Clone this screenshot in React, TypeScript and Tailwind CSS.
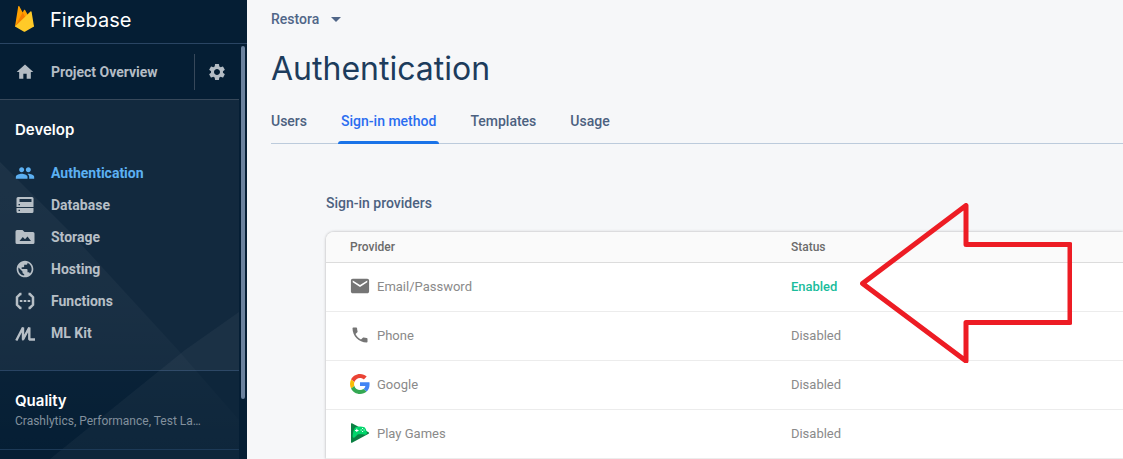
import type { ReactNode } from "react";
import { MdHome, MdPeople, MdPublic, MdSettings } from "react-icons/md";

const roboto = "font-['Roboto',sans-serif]";
const display = "font-['Inter','Roboto',sans-serif]";

function FirebaseLogo() {
  return (
    <svg viewBox="0 0 19 26" className="h-[26px] w-[19px] shrink-0" aria-hidden="true">
      <path fill="#FFA000" d="M0 20.6 3.2.5c.1-.6.8-.7 1.1-.2l3.4 6.3 1.3-2.5c.3-.5.9-.5 1.1 0L19 20.6z" />
      <path fill="#F57C00" d="M11 12.6 7.7 6.6 0 20.6z" />
      <path fill="#FFCA28" d="M19 20.6 16.6 5.8c-.1-.6-.8-.8-1.1-.4L0 20.6l8.6 4.9c.5.3 1.2.3 1.7 0z" />
    </svg>
  );
}

function DatabaseIcon() {
  return (
    <svg viewBox="0 0 20 20" className="size-5" fill="currentColor" aria-hidden="true">
      <path
        fillRule="evenodd"
        d="M3 2h14a1.500 1.500 0 0 1 1.500 1.500V12h-17V3.500A1.500 1.500 0 0 1 3 2zm1.500 2v3h12V4zM3.500 9v1.200h1.500V9z"
      />
      <path
        fillRule="evenodd"
        d="M1.500 13h17v3.500A1.500 1.500 0 0 1 17 18H3a1.500 1.500 0 0 1-1.500-1.500zm2 1.800v1.200h1.500v-1.200z"
      />
    </svg>
  );
}

function StorageIcon() {
  return (
    <svg viewBox="0 0 20 20" className="size-5" fill="currentColor" aria-hidden="true">
      <path
        fillRule="evenodd"
        d="M2 3h5.500l2 2H18a1.500 1.500 0 0 1 1.500 1.500v9A1.500 1.500 0 0 1 18 17H2a1.500 1.500 0 0 1-1.500-1.500v-11A1.500 1.500 0 0 1 2 3zm2.500 11h11.500l-3.500-4.500-2.500 2.700-2.200-2.200z"
      />
    </svg>
  );
}

function FunctionsIcon() {
  return (
    <svg viewBox="0 0 20 20" className="size-5" aria-hidden="true">
      <path
        fill="none"
        stroke="currentColor"
        strokeWidth="2.500"
        d="M6.500 3H5.200L2 6.200V13.800L5.200 17H6.500M13.500 3H14.800L18 6.200V13.800L14.800 17H13.500"
      />
      <path fill="currentColor" d="M4.800 9h2.600v2H4.800zM8.700 9h2.600v2H8.700zM12.600 9h2.600v2h-2.600z" />
    </svg>
  );
}

function MlKitIcon() {
  return (
    <svg viewBox="0 0 20 20" className="size-5" aria-hidden="true">
      <path fill="none" stroke="currentColor" strokeWidth="2.400" strokeLinejoin="bevel" d="M1.300 17.500 8 4.500v12L14.300 4.500v12H20" />
      <path fill="none" stroke="currentColor" strokeWidth="1.500" d="M7.500 17.300 13.500 6" />
    </svg>
  );
}

function EmailIcon() {
  return (
    <svg viewBox="1 1 22 22" className="size-5 text-[#757575]" fill="currentColor" aria-hidden="true">
      <path d="M20 4H4c-1.100 0-1.990.9-1.990 2L2 18c0 1.100.9 2 2 2h16c1.100 0 2-.9 2-2V6c0-1.100-.9-2-2-2zm0 4-8 5-8-5V6l8 5 8-5v2z" />
    </svg>
  );
}

function PhoneIcon() {
  return (
    <svg viewBox="0 0 24 24" className="size-5 text-[#757575]" fill="currentColor" aria-hidden="true">
      <path d="M6.620 10.790c1.440 2.830 3.760 5.140 6.590 6.590l2.200-2.200c.270-.270.670-.360 1.020-.240 1.120.370 2.330.570 3.570.570.550 0 1 .450 1 1V20c0 .550-.450 1-1 1-9.390 0-17-7.610-17-17 0-.550.450-1 1-1h3.500c.550 0 1 .450 1 1 0 1.250.200 2.450.570 3.570.110.350.030.740-.250 1.020l-2.200 2.200z" />
    </svg>
  );
}

function GoogleIcon() {
  return (
    <svg viewBox="0 0 48 48" className="size-5" aria-hidden="true">
      <path fill="#EA4335" d="M24 9.500c3.540 0 6.710 1.220 9.210 3.600l6.850-6.850C35.900 2.380 30.470 0 24 0 14.620 0 6.510 5.380 2.560 13.220l7.980 6.190C12.430 13.720 17.740 9.500 24 9.500z" />
      <path fill="#4285F4" d="M46.980 24.550c0-1.570-.150-3.090-.380-4.550H24v9.020h12.940c-.580 2.960-2.260 5.480-4.780 7.180l7.730 6c4.510-4.180 7.090-10.360 7.090-17.650z" />
      <path fill="#FBBC05" d="M10.530 28.590c-.480-1.450-.760-2.990-.760-4.590s.270-3.140.760-4.590l-7.980-6.190C.920 16.460 0 20.120 0 24c0 3.880.920 7.540 2.560 10.780l7.970-6.190z" />
      <path fill="#34A853" d="M24 48c6.480 0 11.930-2.130 15.890-5.810l-7.730-6c-2.150 1.450-4.920 2.300-8.160 2.300-6.260 0-11.570-4.220-13.470-9.910l-7.980 6.190C6.510 42.620 14.620 48 24 48z" />
    </svg>
  );
}

function PlayGamesIcon() {
  return (
    <svg viewBox="0 0 20 20" className="size-5" aria-hidden="true">
      <path fill="#0B8043" d="M1 .8Q1-.2 2 .3L18.600 9.200Q19.500 10 18.600 10.800L2 19.700Q1 20.200 1 19.200z" />
      <path fill="#00D66B" d="M5.500 4.300Q10 2.800 14.500 4.300Q16.500 6 17 9.800Q16.800 12 15 11.800L12.500 11.300H8L4.500 14.500Q2.500 15.500 2.600 13Q3 7 5.500 4.300z" />
      <path fill="#fff" d="M6.300 5.700h1v1.200h1.200v1H7.300v1.200h-1V7.900H5.100v-1h1.200zM12.100 5h1v1h-1zM12.100 8h1v1h-1zM10.600 6.500h1v1h-1zM13.600 6.500h1v1h-1z" />
    </svg>
  );
}

type NavItem = { label: string; icon: ReactNode; active?: boolean };

const navItems: NavItem[] = [
  { label: "Authentication", icon: <MdPeople className="size-5" />, active: true },
  { label: "Database", icon: <DatabaseIcon /> },
  { label: "Storage", icon: <StorageIcon /> },
  { label: "Hosting", icon: <MdPublic className="size-5" /> },
  { label: "Functions", icon: <FunctionsIcon /> },
  { label: "ML Kit", icon: <MlKitIcon /> },
];

const tabs = ["Users", "Sign-in method", "Templates", "Usage"];

const providers = [
  { name: "Email/Password", icon: <EmailIcon />, enabled: true },
  { name: "Phone", icon: <PhoneIcon />, enabled: false },
  { name: "Google", icon: <GoogleIcon />, enabled: false },
  { name: "Play Games", icon: <PlayGamesIcon />, enabled: false },
];

function Facets() {
  return (
    <svg viewBox="0 0 239 359" className="pointer-events-none absolute top-0 left-0 h-[359px] w-[239px]" aria-hidden="true">
      <defs>
        <linearGradient id="facet" x1="0" y1="0" x2="0" y2="1">
          <stop offset="0" stopColor="#fff" stopOpacity="0.045" />
          <stop offset="0.500" stopColor="#fff" stopOpacity="0.030" />
          <stop offset="1" stopColor="#fff" stopOpacity="0" />
        </linearGradient>
      </defs>
      <path fill="url(#facet)" d="M0 62 68 130 178 250 239 320V359H0z" />
      <path fill="#fff" fillOpacity="0.040" d="M239 212 185 250 50 359H239z" />
    </svg>
  );
}

function Sidebar() {
  return (
    <aside className="flex w-[247px] shrink-0 flex-col bg-[#051e34]">
      <a href="#home" className="flex h-11 items-start gap-4 border-b border-[#2a4563] pl-[15px] pt-[6px] text-white">
        <FirebaseLogo />
        <span className={`${display} text-xl leading-7`}>Firebase</span>
      </a>
      <div className="flex flex-1">
        <div className="flex min-w-0 flex-1 flex-col">
          <div className="flex h-14 items-center border-b border-[#37485a] text-[#b4bcc4]">
            <a href="#overview" className="flex flex-1 items-center gap-4 pl-[15px] text-sm font-bold">
              <MdHome className="size-5" />
              Project Overview
            </a>
            <button type="button" aria-label="Project settings" className="flex h-9 w-[45px] items-center justify-center border-l border-[#37485a]">
              <MdSettings className="size-5" />
            </button>
          </div>
          <nav aria-label="Console" className="relative flex flex-1 flex-col">
            <Facets />
            <section className="border-b border-[#254160] bg-[#12293e] pt-5 pb-[21px]">
              <h2 className={`${display} pl-[15px] text-[15px] leading-5 font-semibold text-white`}>Develop</h2>
              <ul className="relative mt-[17px]">
                {navItems.map((item) => (
                  <li key={item.label}>
                    <a
                      href={`#${item.label.toLowerCase().replace(" ", "-")}`}
                      aria-current={item.active ? "page" : undefined}
                      className={`flex h-8 items-center gap-4 pl-[15px] text-sm font-bold ${item.active ? "text-[#5cb0f2]" : "text-[#b7bfc6]"}`}
                    >
                      {item.icon}
                      {item.label}
                    </a>
                  </li>
                ))}
              </ul>
            </section>
            <section className="relative h-[79px] border-b border-[#1d3a57] pt-5 pr-6 pl-[15px]">
              <h2 className={`${display} text-[15px] leading-5 font-semibold text-white`}>Quality</h2>
              <p className="truncate text-xs leading-5 text-[#82909d]">Crashlytics, Performance, Test La…</p>
            </section>
          </nav>
        </div>
        <div className="w-2 px-0.5 pt-[2px]">
          <div className="h-[353px] rounded-full bg-[#6b829e]" />
        </div>
      </div>
    </aside>
  );
}

function ProvidersTable() {
  return (
    <div className="overflow-hidden rounded-tl-lg bg-white shadow-[0_0_3px_rgba(0,0,0,0.300)]">
      <table className="w-full table-fixed border-collapse text-left text-[13px]">
        <thead>
          <tr className="h-[30px] border-b border-[#dcdcdc] bg-[#fafafa] text-xs text-[#6b6b6b]">
            <th scope="col" className="w-7/12 pl-6 font-medium">Provider</th>
            <th scope="col" className="font-medium">Status</th>
          </tr>
        </thead>
        <tbody className="text-[#8a8a8a]">
          {providers.map((p) => (
            <tr key={p.name} className="h-[49px] border-b border-[#ececec]">
              <td className="pl-6">
                <span className="flex items-start gap-[7px] leading-[22px]">
                  {p.icon}
                  {p.name}
                </span>
              </td>
              <td className={p.enabled ? "font-medium text-[#1abc9c]" : ""}>{p.enabled ? "Enabled" : "Disabled"}</td>
            </tr>
          ))}
        </tbody>
      </table>
    </div>
  );
}

function Arrow() {
  return (
    <svg viewBox="0 0 212 160" className="pointer-events-none absolute top-[203px] left-[613px] h-40 w-[212px]" aria-hidden="true">
      <path
        fill="none"
        stroke="#ED1C24"
        strokeWidth="5"
        strokeLinejoin="round"
        d="M2.500 80.500 106 2.500V41.500H210V119.500H106V158z"
      />
    </svg>
  );
}

export default function App() {
  return (
    <div className={`${roboto} flex min-h-screen bg-[#f6f7f9]`}>
      <Sidebar />
      <main className="relative min-w-0 flex-1 pl-6">
        <button type="button" className="mt-[9px] flex h-5 items-center gap-3 text-sm font-medium text-[#506688]">
          Restora
          <svg viewBox="0 0 10 5" className="h-[5px] w-[10px]" fill="currentColor" aria-hidden="true">
            <path d="M0 0h10L5 5z" />
          </svg>
        </button>
        <h1 className={`${display} mt-5 text-[32px] leading-10 text-[#1d3c5c]`}>Authentication</h1>
        <div role="tablist" className="mt-[11px] flex h-11 gap-[34px] border-b border-[#bccbdc]">
          {tabs.map((tab) => {
            const selected = tab === "Sign-in method";
            return (
              <button
                key={tab}
                type="button"
                role="tab"
                aria-selected={selected}
                className={`relative flex h-[43px] items-center pb-0.5 text-sm font-medium ${selected ? "text-[#2a6df0]" : "text-[#4c6180]"}`}
              >
                {tab}
                {selected && <span className="absolute -inset-x-[3px] -bottom-px h-[3px] rounded-t-sm bg-[#1a73e8]" />}
              </button>
            );
          })}
        </div>
        <section className="pl-[55px]">
          <h2 className="mt-[49px] mb-[19px] text-sm leading-5 font-medium text-[#4c6180]">Sign-in providers</h2>
          <ProvidersTable />
        </section>
        <Arrow />
      </main>
    </div>
  );
}
